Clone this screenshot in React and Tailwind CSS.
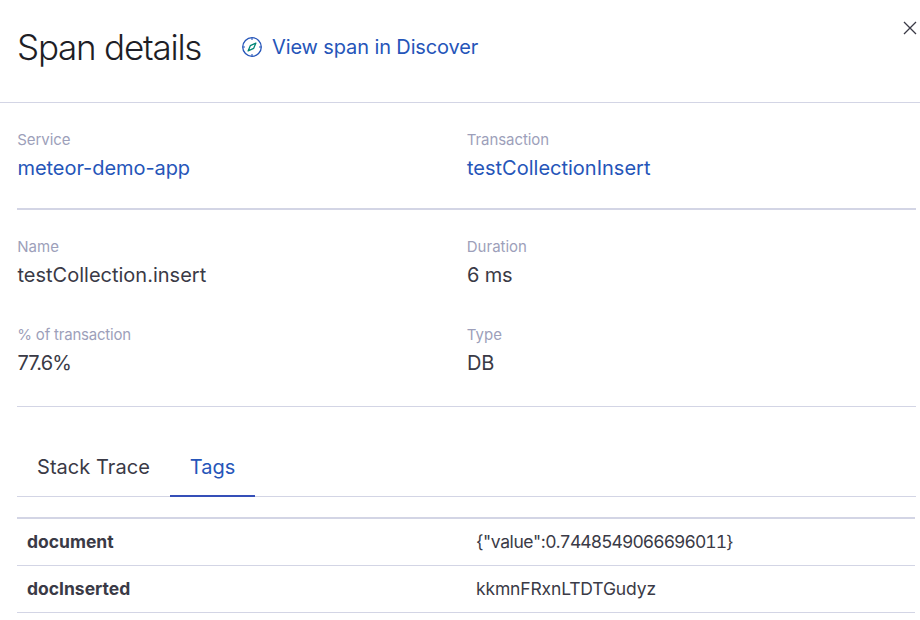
function Field({ label, value, link, labelClass = "", valueClass = "" }) {
  return (
    <div>
      <div className={`pl-[0.3px] text-[15px] leading-[22px] text-[#9d9fba] ${labelClass}`}>{label}</div>
      <div className={`mt-[2px] pl-[0.5px] text-[20px] leading-[30px] ${link ? "text-[#2555b9]" : "text-[#3a3a46]"} ${valueClass}`}>{value}</div>
    </div>
  );
}

const tags = [
  {
    name: "document",
    value: (
      <>
        {'{"value":'}
        <span className="tabular-nums tracking-[-0.93px]">{"0.7448549066696011}"}</span>
      </>
    ),
    className: "tracking-[-0.4px]",
  },
  { name: "docInserted", value: "kkmnFRxnLTDTGudyz", className: "tracking-[-0.15px]" },
];

export default function App() {
  return (
    <div className="h-[620px] w-[920px] overflow-hidden bg-white font-['Inter',sans-serif] text-[#3a3a46]">
      <header className="flex h-[103px] items-start border-b border-[#d3d5e5] pl-[17px]">
        <h1 className="mt-[23px] w-[224px] whitespace-nowrap text-[35px] font-light leading-[48px] tracking-[-1.22px] text-[#1e1e26]">Span details</h1>
        <a className="mt-[32px] flex items-center text-[20px] leading-[30px] tracking-[-0.12px] text-[#2555b9]">
          <svg className="mr-[10px]" width="21" height="21" viewBox="0 0 21 21" fill="none">
            <circle cx="11" cy="10" r="9.3" stroke="#2555b9" strokeWidth="1.3" />
            <path d="M11 1v2M11 17v2M2 10h2M18 10h2" stroke="#2555b9" strokeWidth="1.1" />
            <path d="M14.9 6.1l-2.2 5.2-5.6 2.6 2.2-5.2z" stroke="#018576" strokeWidth="1.3" strokeLinejoin="round" />
          </svg>
          View span in Discover
        </a>
        <svg className="ml-auto mr-[3px] mt-[21px]" width="14" height="14" viewBox="0 0 14 14">
          <path d="M1 1l12 12M13 1L1 13" stroke="#3a3a46" strokeWidth="1.3" />
        </svg>
      </header>
      <main className="pl-[17px] pr-[4px]">
        <section className="grid h-[107px] grid-cols-2 border-b-2 border-[#d3d5e5] pt-[26px]">
          <Field label="Service" value="meteor-demo-app" link valueClass="tracking-[-0.06px]" labelClass="tracking-[-0.08px]" />
          <Field label="Transaction" value="testCollectionInsert" link labelClass="tracking-[-0.08px]" />
        </section>
        <section className="grid h-[197px] grid-cols-2 grid-rows-[88px_88px] border-b border-[#d3d5e5] pt-[26px]">
          <Field label="Name" value="testCollection.insert" />
          <Field label="Duration" value="6 ms" valueClass="tracking-[-0.2px]" />
          <Field label="% of transaction" value="77.6%" labelClass="tracking-[-0.2px]" valueClass="tracking-[-0.85px]" />
          <Field label="Type" value="DB" valueClass="tracking-[-0.3px]" />
        </section>
        <nav className="mt-[30px] flex h-[60px] border-b border-[#d3d5e5] text-[20px] leading-[60px]">
          <div className="w-[153px] pl-[20px] tracking-[0.05px]">Stack Trace</div>
          <div className="h-[60px] w-[85px] border-b-2 border-[#354fb8] text-center text-[#2555b9]">Tags</div>
        </nav>
        <div className="mr-px mt-[20px] border-t-2 border-[#d3d5e5] text-[17.5px]">
          {tags.map(({ name, value, className }) => (
            <div key={name} className="grid h-[47px] grid-cols-2 items-center border-b border-[#d3d5e5]">
              <div className="pl-[10px] font-bold">{name}</div>
              <div className={`pl-[10px] ${className}`}>{value}</div>
            </div>
          ))}
        </div>
      </main>
    </div>
  );
}
